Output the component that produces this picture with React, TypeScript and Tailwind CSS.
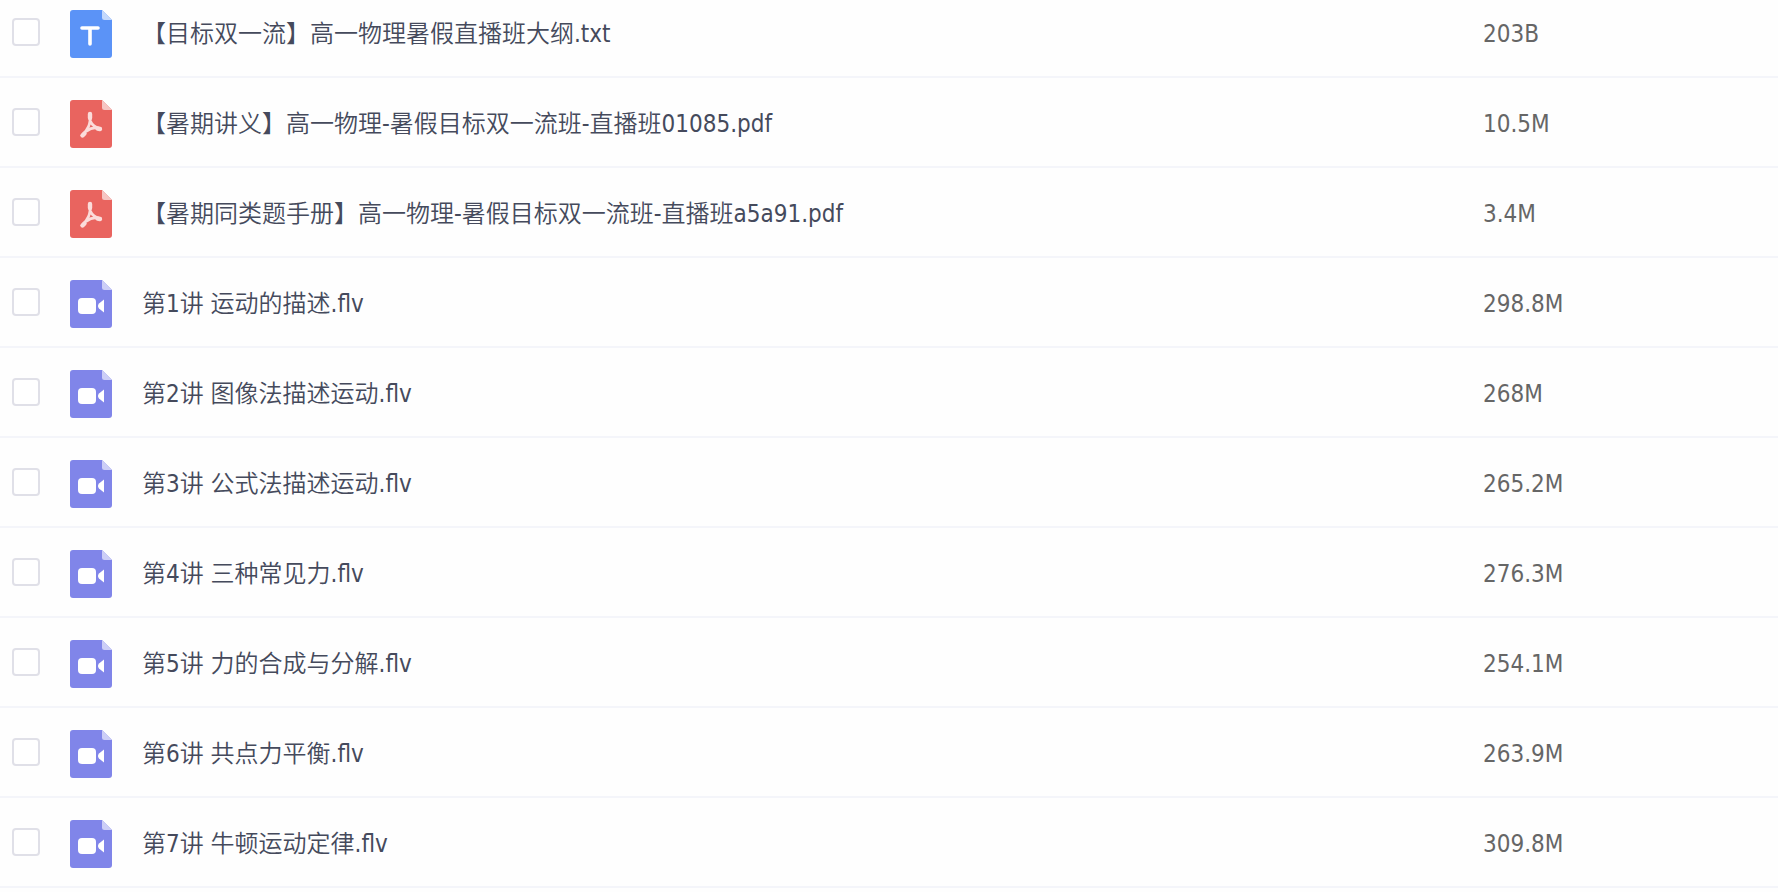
import React, { useState } from 'react';

type FileType = 'txt' | 'pdf' | 'video';

interface FileItem {
  id: number;
  name: string;
  size: string;
  type: FileType;
}

const files: FileItem[] = [
  { id: 1, name: '【目标双一流】高一物理暑假直播班大纲.txt', size: '203B', type: 'txt' },
  { id: 2, name: '【暑期讲义】高一物理-暑假目标双一流班-直播班01085.pdf', size: '10.5M', type: 'pdf' },
  { id: 3, name: '【暑期同类题手册】高一物理-暑假目标双一流班-直播班a5a91.pdf', size: '3.4M', type: 'pdf' },
  { id: 4, name: '第1讲 运动的描述.flv', size: '298.8M', type: 'video' },
  { id: 5, name: '第2讲 图像法描述运动.flv', size: '268M', type: 'video' },
  { id: 6, name: '第3讲 公式法描述运动.flv', size: '265.2M', type: 'video' },
  { id: 7, name: '第4讲 三种常见力.flv', size: '276.3M', type: 'video' },
  { id: 8, name: '第5讲 力的合成与分解.flv', size: '254.1M', type: 'video' },
  { id: 9, name: '第6讲 共点力平衡.flv', size: '263.9M', type: 'video' },
  { id: 10, name: '第7讲 牛顿运动定律.flv', size: '309.8M', type: 'video' },
];

const iconColors: Record<FileType, { page: string; fold: string }> = {
  txt: { page: '#5b93f7', fold: '#c3d8fc' },
  pdf: { page: '#e9645f', fold: '#f6c5c3' },
  video: { page: '#8085e9', fold: '#cccef7' },
};

const FileIcon: React.FC<{ type: FileType }> = ({ type }) => {
  const { page, fold } = iconColors[type];

  return (
    <svg viewBox="0 0 42 48" className="h-12 w-[42px] flex-shrink-0" aria-hidden="true">
      <path d="M3 0H32L42 10V45a3 3 0 0 1-3 3H3a3 3 0 0 1-3-3V3a3 3 0 0 1 3-3Z" fill={page} />
      <path d="M32 0L42 10H34.500a2.500 2.500 0 0 1-2.500-2.500Z" fill={fold} />
      {type === 'txt' && (
        <path d="M12 18H28M20 18V34" fill="none" stroke="#fff" strokeWidth="3.600" strokeLinecap="round" />
      )}
      {type === 'pdf' && (
        <g fill="none" stroke="#fbdcda" strokeLinecap="round" strokeLinejoin="round">
          <path
            d="M20 14C20.500 19 20.500 22 18.500 26.500C17 30 14.500 33 12 35.500M20.300 21C22 25 25 27.500 30 28.500M16.500 31C20 28.500 24 27.500 27 28"
            strokeWidth="2.800"
          />
          <path d="M20 14V18M12.500 35.500L14.500 33.500M27.500 28.500L30 29" strokeWidth="4.400" />
        </g>
      )}
      {type === 'video' && (
        <g fill="#fff">
          <rect x="8" y="18" width="18" height="16" rx="4" />
          <path d="M34 19.500V32.500L29 28.500Q27 26 29 23.500Z" />
        </g>
      )}
    </svg>
  );
};

const App: React.FC = () => {
  const [selected, setSelected] = useState<number[]>([]);

  const toggle = (id: number) => {
    setSelected((prev) => (prev.includes(id) ? prev.filter((x) => x !== id) : [...prev, id]));
  };

  return (
    <div className="min-h-screen overflow-hidden bg-[#fefefe] font-['DejaVu_Sans_Condensed','Noto_Sans_CJK_SC',sans-serif] text-2xl font-[350]">
      {/* The list is scrolled slightly past its first row */}
      <table className="-mt-3 w-full border-separate border-spacing-0">
        <tbody>
          {files.map((file) => (
            <tr key={file.id}>
              <td className="h-[90px] w-[70px] border-b-2 border-[#f4f5fa] pl-3 align-middle">
                <input
                  id={`file-${file.id}`}
                  type="checkbox"
                  checked={selected.includes(file.id)}
                  onChange={() => toggle(file.id)}
                  className="block size-7 appearance-none rounded border-2 border-[#e0e0e8] bg-white checked:border-[#5b93f7] checked:bg-[#5b93f7]"
                />
              </td>
              <td className="border-b-2 border-[#f4f5fa] align-middle">
                <div className="flex items-center gap-[30px] pt-1">
                  <FileIcon type={file.type} />
                  <label htmlFor={`file-${file.id}`} className="whitespace-nowrap leading-8 text-[#454a5c]">
                    {file.name}
                  </label>
                </div>
              </td>
              <td className="w-[295px] border-b-2 border-[#f4f5fa] pt-1 align-middle leading-8 text-[#666666]">
                {file.size}
              </td>
            </tr>
          ))}
        </tbody>
      </table>
    </div>
  );
};

export default App;
